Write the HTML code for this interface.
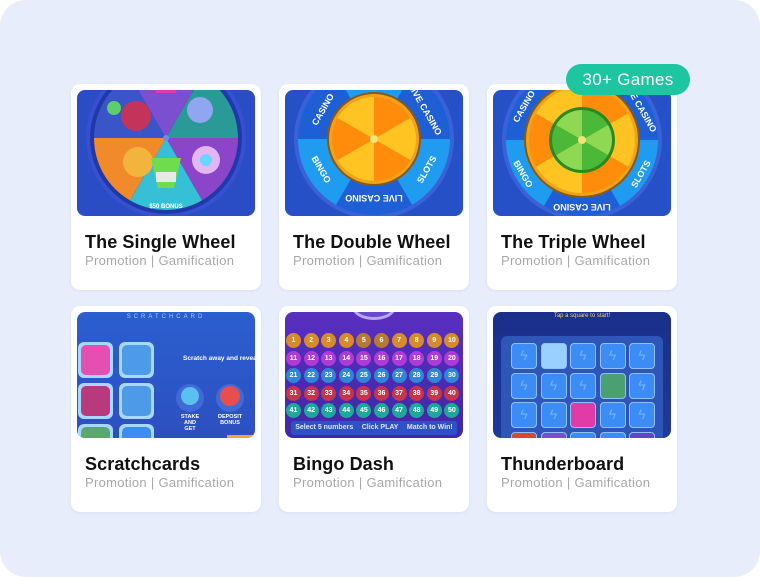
<!DOCTYPE html>
<html><head><meta charset="utf-8"><style>
*{margin:0;padding:0;box-sizing:border-box}
html,body{width:760px;height:577px;background:#fff;overflow:hidden;font-family:"Liberation Sans",sans-serif}
.panel{position:absolute;left:0;top:0;width:760px;height:577px;background:#e7edfb;border-radius:26px}
.card{position:absolute;width:190px;height:206px;background:#fff;border-radius:9px;box-shadow:0 1px 3px rgba(60,80,140,.08)}
.img{position:absolute;left:6px;top:6px;width:178px;height:126px;border-radius:8px;overflow:hidden}
.t{position:absolute;left:14px;top:148px;font-size:18px;font-weight:bold;color:#111;letter-spacing:.1px}
.s{position:absolute;left:14px;top:169px;font-size:13px;color:#a8a8a8;letter-spacing:.3px}
.badge{position:absolute;left:566px;top:64px;width:124px;height:31px;border-radius:16px;background:#1dc5a1;color:#fff;font-size:17px;text-align:center;line-height:31px;letter-spacing:.3px}
.bg{display:grid;grid-template-columns:repeat(10,15px);gap:2.6px;position:absolute;left:1px;top:21px}
.bg span{width:15px;height:15px;border-radius:50%;font-size:7px;color:#fff;text-align:center;line-height:15px;font-weight:bold}
.tb{display:grid;grid-template-columns:repeat(5,26px);gap:3.5px;position:absolute;left:18px;top:31px}
.tb span{width:26px;height:26px;border-radius:4px;background:#3c8cf5;border:1.5px solid #8fc0ff;color:#6fb2ff;font-size:14px;text-align:center;line-height:22px}
</style></head><body>
<div class="panel"></div>

<!-- Card 1 -->
<div class="card" style="left:71px;top:84px">
<div class="img" style="background:#2a4cc4">
<svg width="178" height="126" viewBox="0 0 178 126">
<g transform="translate(89,48)">
<circle r="80" fill="#3550d0"/>
<circle r="76" fill="#1f3aa8"/>
<g transform="scale(72)">
<path d="M0 0 L1 0 A1 1 0 0 1 .5 .866 Z" fill="#8a45c9"/>
<path d="M0 0 L.5 .866 A1 1 0 0 1 -.5 .866 Z" fill="#35c0d6"/>
<path d="M0 0 L-.5 .866 A1 1 0 0 1 -1 0 Z" fill="#f08a2a"/>
<path d="M0 0 L-1 0 A1 1 0 0 1 -.5 -.866 Z" fill="#3a55c8"/>
<path d="M0 0 L-.5 -.866 A1 1 0 0 1 .5 -.866 Z" fill="#7b4fd0"/>
<path d="M0 0 L.5 -.866 A1 1 0 0 1 1 0 Z" fill="#2a9a96"/>
</g>
<circle cx="-30" cy="-22" r="15" fill="#c4335a"/>
<circle cx="-52" cy="-30" r="7" fill="#5ccf6a"/>
<circle cx="34" cy="-28" r="13" fill="#8fa6f0"/>
<circle cx="40" cy="22" r="14" fill="#e2b6f2"/><circle cx="40" cy="22" r="6" fill="#67d6ff"/>
<circle cx="-28" cy="24" r="15" fill="#f2b43c"/>
<path d="M-15 20 L15 20 L8 50 L-8 50 Z" fill="#6fdc50"/>
<rect x="-10" y="34" width="20" height="10" fill="#e8e8e8"/>
<path d="M-14 -60 L14 -60 L10 -45 L-10 -45Z" fill="#e23ba8"/>
<circle r="3" fill="#6a8bff"/>
<g fill="#fff" font-size="6" font-weight="bold" text-anchor="middle">
<text transform="translate(0,70)">$50 BONUS</text>
</g>
</g>
</svg></div>
<div class="t">The Single Wheel</div><div class="s">Promotion | Gamification</div></div>

<!-- Card 2 -->
<div class="card" style="left:279px;top:84px">
<div class="img" style="background:#2550c6">
<svg width="178" height="126" viewBox="0 0 178 126">
<g transform="translate(89,49)">
<circle r="80" fill="#3a62d8"/>
<g transform="scale(76)">
<path d="M0 0 L1 0 A1 1 0 0 1 .5 .866 Z" fill="#1f9cf0"/>
<path d="M0 0 L.5 .866 A1 1 0 0 1 -.5 .866 Z" fill="#1f5fd6"/>
<path d="M0 0 L-.5 .866 A1 1 0 0 1 -1 0 Z" fill="#1f9cf0"/>
<path d="M0 0 L-1 0 A1 1 0 0 1 -.5 -.866 Z" fill="#1f5fd6"/>
<path d="M0 0 L-.5 -.866 A1 1 0 0 1 .5 -.866 Z" fill="#1f9cf0"/>
<path d="M0 0 L.5 -.866 A1 1 0 0 1 1 0 Z" fill="#1f5fd6"/>
</g>
<circle r="47" fill="#8a5a10"/><circle r="45" fill="#f0a21a"/>
<g transform="rotate(30) scale(42)">
<path d="M0 0 L1 0 A1 1 0 0 1 .5 .866 Z" fill="#ff8c0a"/>
<path d="M0 0 L.5 .866 A1 1 0 0 1 -.5 .866 Z" fill="#ffc421"/>
<path d="M0 0 L-.5 .866 A1 1 0 0 1 -1 0 Z" fill="#ff8c0a"/>
<path d="M0 0 L-1 0 A1 1 0 0 1 -.5 -.866 Z" fill="#ffc421"/>
<path d="M0 0 L-.5 -.866 A1 1 0 0 1 .5 -.866 Z" fill="#ff8c0a"/>
<path d="M0 0 L.5 -.866 A1 1 0 0 1 1 0 Z" fill="#ffc421"/>
</g>
<circle r="4" fill="#f6e27a"/>
<g fill="#fff" font-size="9" font-weight="bold" text-anchor="middle">
<text transform="rotate(-60) translate(0,-56)">CASINO</text>
<text transform="rotate(60) translate(0,-56)">LIVE CASINO</text>
<text transform="rotate(-60) translate(0,64)">SLOTS</text>
<text transform="rotate(60) translate(0,64)">BINGO</text>
<text transform="rotate(180) translate(0,-56)">LIVE CASINO</text>
</g>
</g>
</svg></div>
<div class="t">The Double Wheel</div><div class="s">Promotion | Gamification</div></div>

<!-- Card 3 -->
<div class="card" style="left:487px;top:84px">
<div class="img" style="background:#2550c6">
<svg width="178" height="126" viewBox="0 0 178 126">
<g transform="translate(89,50)">
<circle r="80" fill="#3a62d8"/>
<g transform="scale(76)">
<path d="M0 0 L1 0 A1 1 0 0 1 .5 .866 Z" fill="#1f9cf0"/>
<path d="M0 0 L.5 .866 A1 1 0 0 1 -.5 .866 Z" fill="#1f5fd6"/>
<path d="M0 0 L-.5 .866 A1 1 0 0 1 -1 0 Z" fill="#1f9cf0"/>
<path d="M0 0 L-1 0 A1 1 0 0 1 -.5 -.866 Z" fill="#1f5fd6"/>
<path d="M0 0 L-.5 -.866 A1 1 0 0 1 .5 -.866 Z" fill="#1f9cf0"/>
<path d="M0 0 L.5 -.866 A1 1 0 0 1 1 0 Z" fill="#1f5fd6"/>
</g>
<circle r="58" fill="#8a5a10"/><circle r="56" fill="#f0a21a"/>
<g transform="rotate(30) scale(53)">
<path d="M0 0 L1 0 A1 1 0 0 1 .5 .866 Z" fill="#ff8c0a"/>
<path d="M0 0 L.5 .866 A1 1 0 0 1 -.5 .866 Z" fill="#ffc421"/>
<path d="M0 0 L-.5 .866 A1 1 0 0 1 -1 0 Z" fill="#ff8c0a"/>
<path d="M0 0 L-1 0 A1 1 0 0 1 -.5 -.866 Z" fill="#ffc421"/>
<path d="M0 0 L-.5 -.866 A1 1 0 0 1 .5 -.866 Z" fill="#ff8c0a"/>
<path d="M0 0 L.5 -.866 A1 1 0 0 1 1 0 Z" fill="#ffc421"/>
</g>
<circle r="33" fill="#2a8a20"/>
<g transform="rotate(30) scale(30)">
<path d="M0 0 L1 0 A1 1 0 0 1 .5 .866 Z" fill="#4cb838"/>
<path d="M0 0 L.5 .866 A1 1 0 0 1 -.5 .866 Z" fill="#8fd854"/>
<path d="M0 0 L-.5 .866 A1 1 0 0 1 -1 0 Z" fill="#4cb838"/>
<path d="M0 0 L-1 0 A1 1 0 0 1 -.5 -.866 Z" fill="#8fd854"/>
<path d="M0 0 L-.5 -.866 A1 1 0 0 1 .5 -.866 Z" fill="#4cb838"/>
<path d="M0 0 L.5 -.866 A1 1 0 0 1 1 0 Z" fill="#8fd854"/>
</g>
<circle r="4" fill="#f6e27a"/>
<g fill="#fff" font-size="9" font-weight="bold" text-anchor="middle">
<text transform="rotate(-60) translate(0,-64)">CASINO</text>
<text transform="rotate(60) translate(0,-64)">LIVE CASINO</text>
<text transform="rotate(-60) translate(0,71)">SLOTS</text>
<text transform="rotate(60) translate(0,71)">BINGO</text>
<text transform="rotate(180) translate(0,-64)">LIVE CASINO</text>
</g>
</g>
</svg></div>
<div class="t">The Triple Wheel</div><div class="s">Promotion | Gamification</div></div>
<div class="badge">30+ Games</div>

<!-- Card 4 -->
<div class="card" style="left:71px;top:306px">
<div class="img" style="background:linear-gradient(180deg,#2a5fcf,#2d4fc0)">
<div style="position:absolute;top:2px;width:100%;text-align:center;color:#a9c6ff;font-size:6px;letter-spacing:3px">SCRATCHCARD</div>
<svg width="178" height="126" viewBox="0 0 178 126" style="position:absolute;left:0;top:0">
<rect x="1" y="30" width="35" height="36" rx="6" fill="#a8d8ff"/><rect x="4" y="33" width="29" height="30" rx="5" fill="#e54fb2"/>
<rect x="42" y="30" width="35" height="36" rx="6" fill="#a8d8ff"/><rect x="45" y="33" width="29" height="30" rx="5" fill="#4d9ae8"/>
<rect x="1" y="71" width="35" height="36" rx="6" fill="#a8d8ff"/><rect x="4" y="74" width="29" height="30" rx="5" fill="#b83a7a"/>
<rect x="42" y="71" width="35" height="36" rx="6" fill="#a8d8ff"/><rect x="45" y="74" width="29" height="30" rx="5" fill="#4d9ae8"/>
<rect x="1" y="112" width="35" height="30" rx="6" fill="#a8d8ff"/><rect x="4" y="115" width="29" height="24" rx="5" fill="#5aa86a"/>
<rect x="42" y="112" width="35" height="30" rx="6" fill="#a8d8ff"/><rect x="45" y="115" width="29" height="24" rx="5" fill="#3c8cf5"/>
<circle cx="113" cy="86" r="14" fill="#3f6ad8"/><circle cx="113" cy="84" r="9" fill="#5ac0f0"/>
<circle cx="153" cy="86" r="14" fill="#3f6ad8"/><circle cx="153" cy="84" r="10" fill="#e94e4e"/>
<rect x="150" y="123" width="28" height="5" fill="#f5a23a"/>
</svg>
<div style="position:absolute;left:106px;top:43px;color:#fff;font-size:6.5px;font-weight:bold;white-space:nowrap">Scratch away and reveal :</div>
<div style="position:absolute;left:101px;top:102px;color:#fff;font-size:5.5px;font-weight:bold;text-align:center;width:24px">STAKE AND GET</div>
<div style="position:absolute;left:141px;top:102px;color:#fff;font-size:5.5px;font-weight:bold;text-align:center;width:24px">DEPOSIT BONUS</div>
</div>
<div class="t">Scratchcards</div><div class="s">Promotion | Gamification</div></div>

<!-- Card 5 -->
<div class="card" style="left:279px;top:306px">
<div class="img" style="background:linear-gradient(180deg,#5a2fc0,#4a2ab0 60%,#3c2aa8)">
<div style="position:absolute;left:67px;top:-18px;width:44px;height:26px;border-radius:50%;border:3px solid #b8a8ee;background:#6a48d0"></div>
<div class="bg">
<span style="background:#d98a2a">1</span><span style="background:#d98a2a">2</span><span style="background:#d98a2a">3</span><span style="background:#d98a2a">4</span><span style="background:#b87a30">5</span><span style="background:#b87a30">6</span><span style="background:#d98a2a">7</span><span style="background:#d98a2a">8</span><span style="background:#d98a2a">9</span><span style="background:#d98a2a">10</span>
<span style="background:#b03ad8">11</span><span style="background:#b03ad8">12</span><span style="background:#b03ad8">13</span><span style="background:#b03ad8">14</span><span style="background:#b03ad8">15</span><span style="background:#b03ad8">16</span><span style="background:#b03ad8">17</span><span style="background:#b03ad8">18</span><span style="background:#b03ad8">19</span><span style="background:#b03ad8">20</span>
<span style="background:#2f86d8">21</span><span style="background:#2f86d8">22</span><span style="background:#2f86d8">23</span><span style="background:#2f86d8">24</span><span style="background:#2f86d8">25</span><span style="background:#2f86d8">26</span><span style="background:#2f86d8">27</span><span style="background:#2f86d8">28</span><span style="background:#2f86d8">29</span><span style="background:#2f86d8">30</span>
<span style="background:#c8344c">31</span><span style="background:#c8344c">32</span><span style="background:#c8344c">33</span><span style="background:#c8344c">34</span><span style="background:#c8344c">35</span><span style="background:#c8344c">36</span><span style="background:#c8344c">37</span><span style="background:#c8344c">38</span><span style="background:#c8344c">39</span><span style="background:#c8344c">40</span>
<span style="background:#1fa89a">41</span><span style="background:#1fa89a">42</span><span style="background:#1fa89a">43</span><span style="background:#1fa89a">44</span><span style="background:#1fa89a">45</span><span style="background:#1fa89a">46</span><span style="background:#1fa89a">47</span><span style="background:#1fa89a">48</span><span style="background:#1fa89a">49</span><span style="background:#1fa89a">50</span>
</div>
<div style="position:absolute;left:6px;top:109px;width:166px;height:14px;border-radius:3px;background:#2d52c8;color:#dfe8ff;font-size:7px;font-weight:bold;line-height:14px;display:flex;justify-content:space-around"><span>Select 5 numbers</span><span>Click PLAY</span><span>Match to Win!</span></div>
</div>
<div class="t">Bingo Dash</div><div class="s">Promotion | Gamification</div></div>

<!-- Card 6 -->
<div class="card" style="left:487px;top:306px">
<div class="img" style="background:linear-gradient(180deg,#1a2f8a,#1d3a9a)">
<div style="position:absolute;top:1px;width:100%;text-align:center;color:#f2d36a;font-size:6px">Tap a square to start!</div>
<div style="position:absolute;left:8px;top:24px;width:162px;height:110px;border-radius:6px;background:#2e55b8"></div>
<div class="tb">
<span>ϟ</span><span style="background:#9ad0ff"></span><span>ϟ</span><span>ϟ</span><span>ϟ</span>
<span>ϟ</span><span>ϟ</span><span>ϟ</span><span style="background:#4aa070"></span><span>ϟ</span>
<span>ϟ</span><span>ϟ</span><span style="background:#e23ba8"></span><span>ϟ</span><span>ϟ</span>
<span style="background:#e0452a"></span><span style="background:#7a4fd0"></span><span>ϟ</span><span>ϟ</span><span style="background:#5a48c8"></span>
</div>
</div>
<div class="t">Thunderboard</div><div class="s">Promotion | Gamification</div></div>
</body></html>
